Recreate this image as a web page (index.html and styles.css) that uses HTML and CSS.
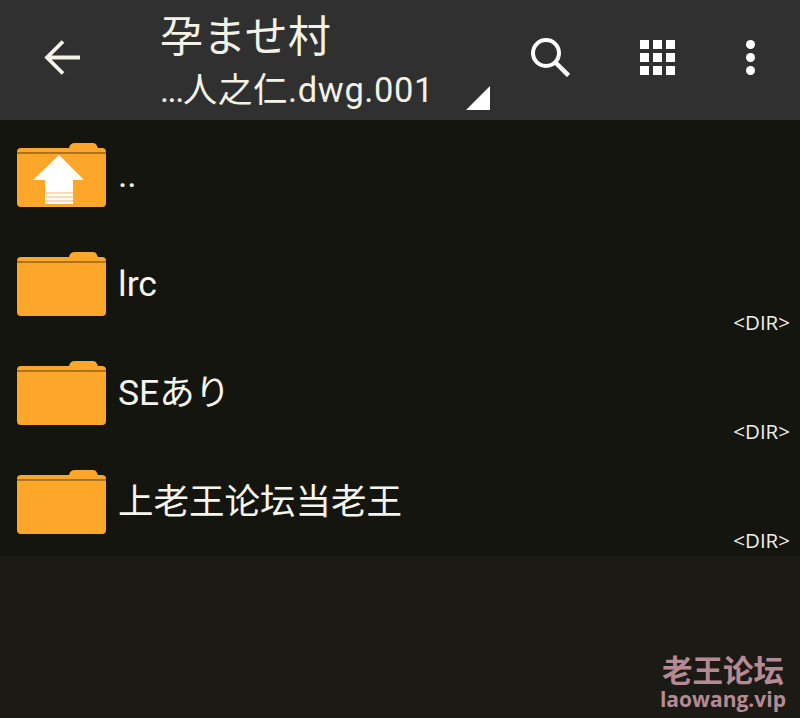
FILE: index.html
```html
<!DOCTYPE html>
<html lang="ja">
<head>
    <meta charset="UTF-8">
    <meta name="viewport" content="width=device-width, initial-scale=1.0">
    <title>File list</title>
    <link rel="stylesheet" href="styles.css">
</head>
<body>
    <svg class="defs" width="0" height="0">
        <symbol id="folder" viewBox="0 0 90 65">
            <path d="M52 5 Q53 0 58 0 H76 Q79 0 80 3 L81 5 Z" fill="#fca72a"/>
            <path d="M0 9 Q0 5 4 5 H85 Q89 5 89 9 V10 H0 Z" fill="#fca72a"/>
            <rect x="0" y="9" width="89" height="1.500" fill="#a9701f"/>
            <path d="M0 10.500 H89 V60 Q89 64 85 64 H4 Q0 64 0 60 Z" fill="#fca72a"/>
        </symbol>
    </svg>

    <header class="topbar">
        <button class="icon-btn back" aria-label="Back">
            <svg width="36" height="36" viewBox="0 0 36 36" fill="none" stroke="#f4f4ea" stroke-width="3.800">
                <path d="M36 17.500 H4 M19 1.500 L3 17.500 L19 33.500"/>
            </svg>
        </button>
        <div class="titles">
            <div class="title">孕ませ村</div>
            <div class="subtitle"><span class="dots">...</span>人之仁.dwg.001</div>
        </div>
        <svg class="corner" width="24" height="24" viewBox="0 0 24 24">
            <path d="M24 0 V24 H0 Z" fill="#fff"/>
        </svg>
        <div class="actions">
            <button class="icon-btn" aria-label="Search">
                <svg width="40" height="40" viewBox="0 0 40 40" fill="none" stroke="#fff" stroke-width="4">
                    <circle cx="16" cy="16" r="13"/>
                    <path d="M25 25 L38.500 38.500" stroke-width="4.500"/>
                </svg>
            </button>
            <button class="icon-btn" aria-label="View">
                <div class="grid-icon">
                    <span></span><span></span><span></span>
                    <span></span><span></span><span></span>
                    <span></span><span></span><span></span>
                </div>
            </button>
            <button class="icon-btn" aria-label="More">
                <div class="dots-icon"><span></span><span></span><span></span></div>
            </button>
        </div>
    </header>

    <main class="file-list">
        <div class="row">
            <svg class="folder" width="90" height="65" viewBox="0 0 90 65">
                <use href="#folder"/>
                <path d="M42 12 L67 37 H56 V61 H28 V37 H16 Z" fill="#fff"/>
                <path d="M28 50 H56 M28 54 H56 M28 58 H56" stroke="#f3b765" stroke-width="1"/>
            </svg>
            <span class="name">..</span>
        </div>
        <div class="row">
            <svg class="folder" width="90" height="65"><use href="#folder"/></svg>
            <span class="name">lrc</span>
            <span class="dir">&lt;DIR&gt;</span>
        </div>
        <div class="row">
            <svg class="folder" width="90" height="65"><use href="#folder"/></svg>
            <span class="name">SEあり</span>
            <span class="dir">&lt;DIR&gt;</span>
        </div>
        <div class="row">
            <svg class="folder" width="90" height="65"><use href="#folder"/></svg>
            <span class="name">上老王论坛当老王</span>
            <span class="dir">&lt;DIR&gt;</span>
        </div>
    </main>

    <div class="watermark">
        <div class="wm-cn">老王论坛</div>
        <div class="wm-en">laowang.vip</div>
    </div>
</body>
</html>
```

FILE: styles.css
```css
html, body {
    height: 100%;
}

body {
    margin: 0;
    background-color: #1b1a14;
    color: #fff;
    font-family: Roboto, "Noto Sans CJK JP", sans-serif;
    overflow: hidden;
}

.defs {
    position: absolute;
}

.topbar {
    height: 120px;
    background-color: #303030;
    display: flex;
    align-items: flex-start;
}

.icon-btn {
    background: none;
    border: none;
    padding: 0;
    display: flex;
    align-items: center;
    justify-content: center;
}

.back {
    width: 36px;
    height: 36px;
    margin: 40px 0 0 44px;
}

.titles {
    margin-left: 82px;
    width: 304px;
    color: #f2f2e6;
}

.title {
    font-size: 43px;
    line-height: 50px;
    margin: 12px 0 0 -2px;
}

.subtitle {
    font-size: 34.500px;
    line-height: 40px;
    margin: 8px 0 0 -2px;
    letter-spacing: 0.6px;
}

.dots {
    letter-spacing: -1.500px;
}

.corner {
    margin-top: 86px;
}

.actions {
    display: flex;
    align-items: center;
    margin-top: 37px;
}

.actions .icon-btn {
    height: 40px;
}

.actions .icon-btn:nth-child(1) {
    margin-left: 40px;
}

.actions .icon-btn:nth-child(2) {
    margin-left: 70px;
}

.actions .icon-btn:nth-child(3) {
    margin-left: 71px;
}

.grid-icon {
    display: grid;
    grid-template-columns: repeat(3, 9px);
    grid-auto-rows: 9px;
    gap: 4px;
}

.grid-icon span {
    background-color: #fff;
}

.dots-icon {
    display: flex;
    flex-direction: column;
    gap: 4px;
}

.dots-icon span {
    width: 9px;
    height: 9px;
    border-radius: 50%;
    background-color: #fff;
}

.file-list {
    background-color: #15150f;
}

.row {
    height: 109px;
    box-sizing: border-box;
    display: flex;
    align-items: flex-start;
    padding: 23px 10px 0 17px;
}

.folder {
    flex-shrink: 0;
}

.name {
    margin: 10px 0 0 11px;
    font-size: 35.500px;
    line-height: 44px;
    color: #f6f6f0;
}

.dir {
    margin: 0 0 0 auto;
    align-self: flex-end;
    padding-bottom: 4px;
    font-size: 20.500px;
    line-height: 24px;
    color: #eeeee8;
    font-family: "Open Sans", sans-serif;
}

.watermark {
    position: absolute;
    right: 14px;
    bottom: 7px;
    color: #b58a96;
    font-weight: 700;
    text-align: center;
}

.wm-cn {
    font-family: "Noto Sans CJK SC", sans-serif;
    font-size: 30.500px;
    line-height: 32px;
}

.wm-en {
    margin-top: 2px;
    font-family: "Open Sans", sans-serif;
    font-size: 21px;
    line-height: 24px;
    font-weight: 700;
}
```
